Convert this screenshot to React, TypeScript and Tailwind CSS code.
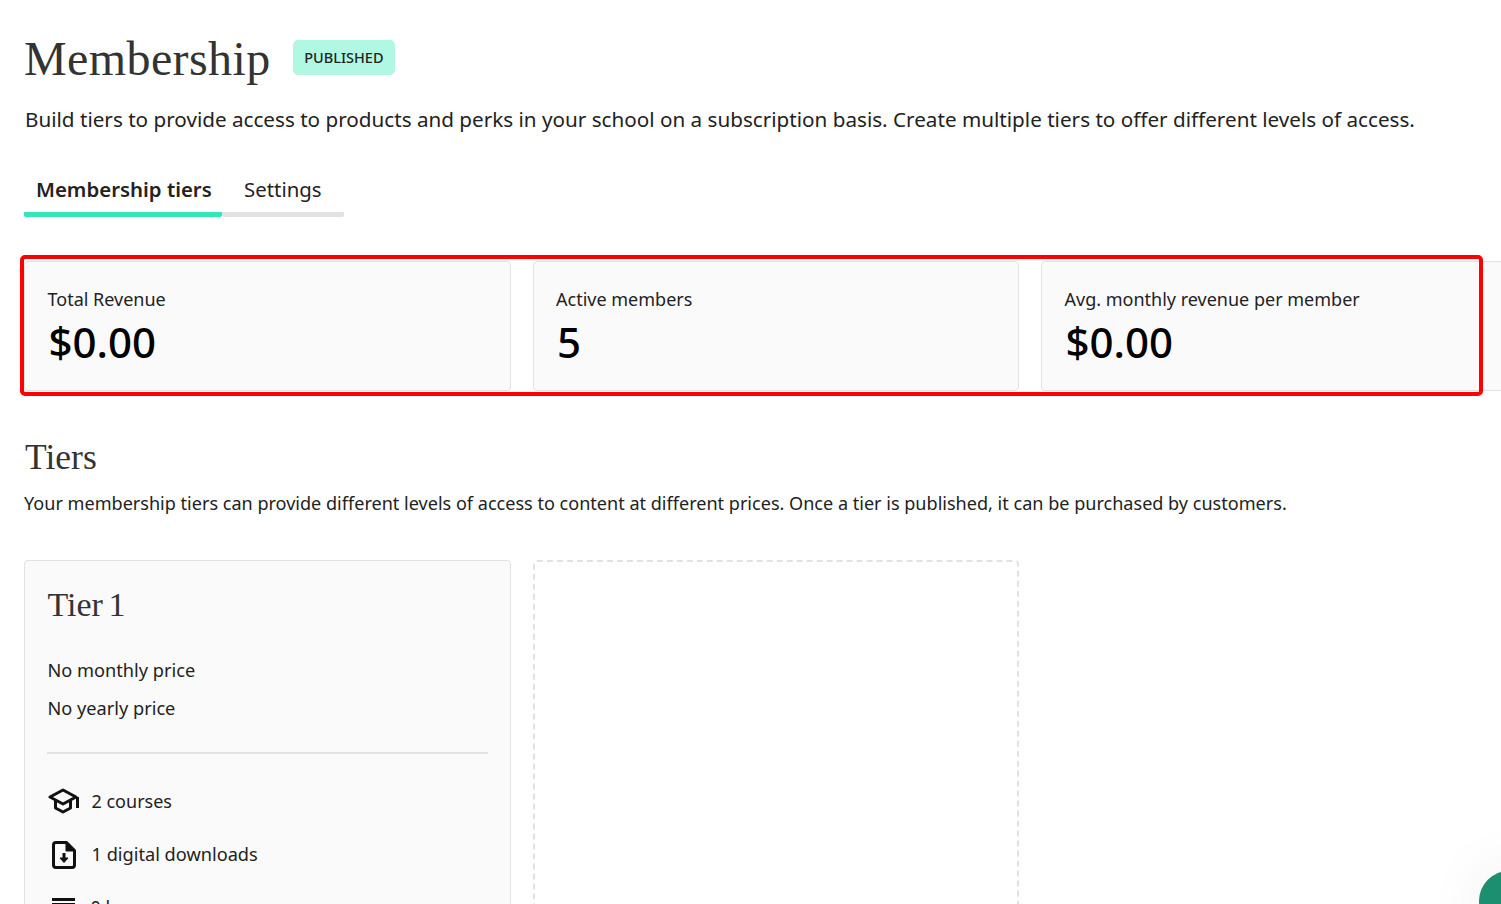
import React from 'react';

const stats = [
  { label: 'Total Revenue', value: '$0.00' },
  { label: 'Active members', value: '5' },
  { label: 'Avg. monthly revenue per member', value: '$0.00' },
];

function CapIcon() {
  return (
    <svg width="32" height="26" viewBox="0 0 32 26" fill="none" stroke="#111" strokeWidth="3" strokeLinejoin="round">
      <path d="M15 2 L28 9 L15 16 L2 9 Z" />
      <path d="M7.5 13 V20 L15 24 L22.5 20 V13" />
      <path d="M29.5 9 V20" />
    </svg>
  );
}

function DownloadIcon() {
  return (
    <svg width="24" height="28" viewBox="0 0 24 28" fill="none" stroke="#111" strokeWidth="3" strokeLinejoin="round">
      <path d="M14.5 1.5 H4 Q1.5 1.5 1.5 4 V24 Q1.5 26.5 4 26.5 H20 Q22.5 26.5 22.5 24 V9.5 Z" />
      <path d="M14.5 1.5 V9.5 H22.5" fill="#111" strokeWidth="2" />
      <path d="M12 12 V19" />
      <path d="M8 17 L12 21.5 L16 17 Z" fill="#111" strokeWidth="1" />
    </svg>
  );
}

function LinesIcon() {
  return (
    <svg width="23" height="13" viewBox="0 0 23 13" fill="#111">
      <rect x="0" y="0" width="23" height="3" />
      <rect x="0" y="5" width="23" height="3" />
      <rect x="0" y="10" width="23" height="3" />
    </svg>
  );
}

export default function App() {
  return (
    <div className="relative h-[904px] w-full overflow-hidden bg-white text-[#222] font-['Noto_Sans',sans-serif]">
      <div className="pl-6 pt-[31px]">
        <div className="flex items-center gap-[22px] h-[56px]">
          <h1 className="text-[48px] leading-[56px] tracking-[0.4px] font-normal text-[#333] font-['Liberation_Serif',serif]">Membership</h1>
          <span className="-mt-[3px] flex h-[35px] items-center rounded-[5px] bg-[#b0f8e2] px-[11.5px] text-[14.5px] font-medium">PUBLISHED</span>
        </div>
        <p className="mt-[16px] pl-px text-[20.66px] leading-[32px] whitespace-nowrap">
          Build tiers to provide access to products and perks in your school on a subscription basis. Create multiple tiers to offer different levels of access.
        </p>

        <div className="mt-[39px] flex w-[320px]">
          <div className="w-[198px] border-b-[5px] border-[#34e5b5] rounded-b-[2px] pl-3 pb-2 text-[20.4px] leading-[30px] font-semibold whitespace-nowrap">Membership tiers</div>
          <div className="w-[122px] border-b-[5px] border-[#e2e2e2] rounded-b-[2px] pl-[22px] pb-2 text-[20.4px] leading-[30px]">Settings</div>
        </div>

        <div className="mt-[44px] flex gap-[22px] w-[1600px]">
          {stats.map((s) => (
            <div key={s.label} className="h-[130px] w-[486.5px] rounded border border-[#e2e2e2] bg-[#fafafa] pl-[22.5px] pt-[25px]">
              <div className="text-[18px] leading-[24px] whitespace-nowrap">{s.label}</div>
              <div className="mt-1 pl-px text-[42px] leading-[54px] font-medium text-black">{s.value}</div>
            </div>
          ))}
        </div>

        <h2 className="mt-[44px] pl-px text-[35.5px] leading-[44px] font-normal text-[#333] font-['Liberation_Serif',serif]">Tiers</h2>
        <p className="mt-[11px] text-[18.07px] leading-[26px] whitespace-nowrap">
          Your membership tiers can provide different levels of access to content at different prices. Once a tier is published, it can be purchased by customers.
        </p>

        <div className="mt-[44px] flex gap-[22px]">
          <div className="h-[400px] w-[486.5px] rounded border border-[#e2e2e2] bg-[#fafafa] px-[22.5px] pt-[22px]">
            <h3 className="text-[34px] leading-[44px] font-normal text-[#333] [word-spacing:-3px] font-['Liberation_Serif',serif]">Tier 1</h3>
            <p className="mt-[30px] text-[18.2px] leading-[26px]">No monthly price</p>
            <p className="mt-3 text-[18.2px] leading-[26px]">No yearly price</p>
            <div className="mt-[31px] -ml-px h-[2px] w-[441px] bg-[#e2e2e2]" />
            <div className="mt-[34px] flex items-center gap-[12px] h-[26px] text-[18px]">
              <CapIcon />
              <span>2 courses</span>
            </div>
            <div className="mt-[28px] flex items-center gap-[16px] h-[26px] pl-[4px] text-[18.2px]">
              <DownloadIcon />
              <span>1 digital downloads</span>
            </div>
            <div className="mt-[26px] flex items-start gap-[16px] pl-[4px] text-[18px]">
              <div className="mt-[4px] shrink-0">
                <LinesIcon />
              </div>
              <span className="leading-[26px]">0 lessons</span>
            </div>
          </div>
          <div className="h-[400px] w-[486.5px] rounded border-2 border-dashed border-[#e2e2e2]" />
        </div>
      </div>

      {/* annotation box */}
      <div className="absolute left-[20px] top-[255px] h-[141px] w-[1463px] rounded-[5px] border-[4px] border-[#ff0000]" />

      {/* chat bubble */}
      <div className="absolute left-[1479px] top-[871px] h-[60px] w-[60px] rounded-full bg-[#1b8f6f] shadow-[0_0_60px_rgba(0,0,0,0.08)]" />
    </div>
  );
}
